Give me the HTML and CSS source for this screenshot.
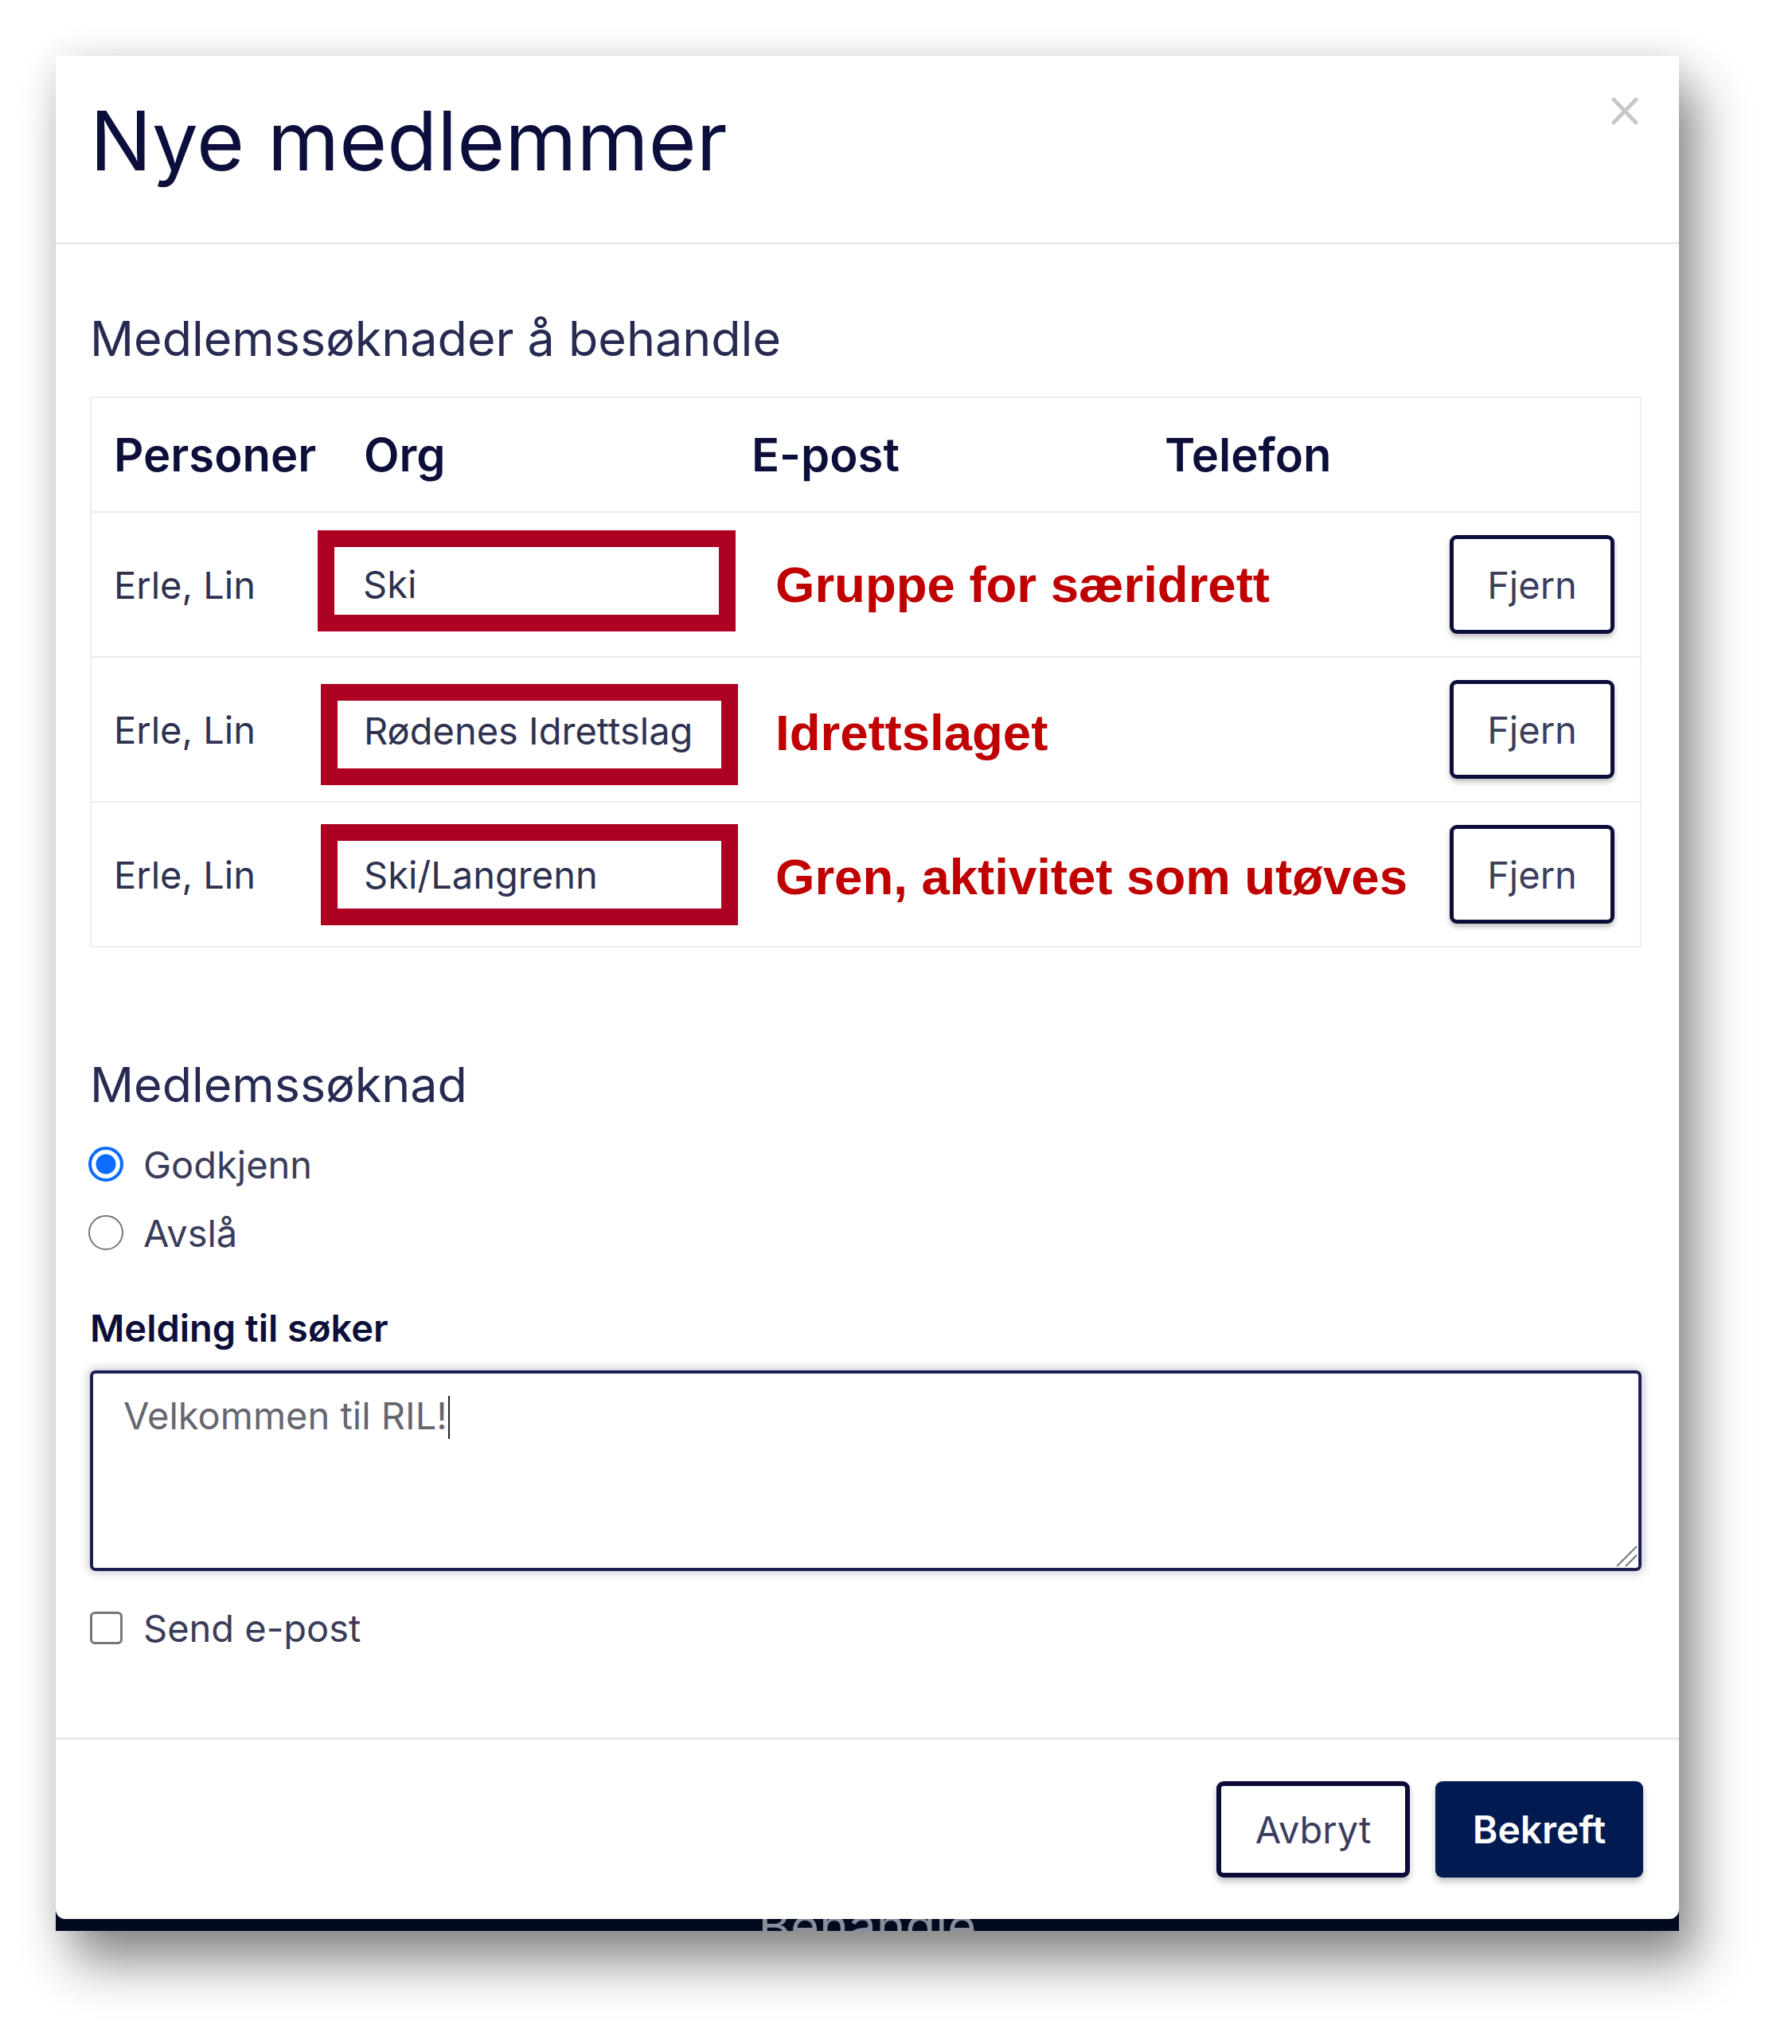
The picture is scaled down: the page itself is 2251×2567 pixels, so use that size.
FILE: index.html
```html
<!DOCTYPE html>
<html lang="no">
<head>
<meta charset="utf-8">
<title>Nye medlemmer</title>
<link rel="stylesheet" href="styles.css">
</head>
<body>
<div class="stage">
  <div class="shot">
    <div class="dialog">
      <header class="dlg-head">
        <h1 class="dlg-title">Nye medlemmer</h1>
        <button class="close" aria-label="Lukk">
          <svg width="36" height="35" viewBox="0 0 36 35"><path d="M4 3 L32 32 M32 3 L4 32" stroke="#c8c8c8" stroke-width="5" stroke-linecap="round" fill="none"/></svg>
        </button>
      </header>
      <div class="dlg-body">
        <h2 class="section-title">Medlemssøknader å behandle</h2>
        <div class="tbl">
          <div class="tbl-head">
            <div class="th">Personer</div>
            <div class="th">Org</div>
            <div class="th">E-post</div>
            <div class="th">Telefon</div>
          </div>
          <div class="tr tr-1">
            <div class="td-name">Erle, Lin</div>
            <div class="org-box">Ski</div>
            <div class="note">Gruppe for særidrett</div>
            <button class="btn-fjern">Fjern</button>
          </div>
          <div class="tr tr-2">
            <div class="td-name">Erle, Lin</div>
            <div class="org-box">Rødenes Idrettslag</div>
            <div class="note">Idrettslaget</div>
            <button class="btn-fjern">Fjern</button>
          </div>
          <div class="tr tr-3">
            <div class="td-name">Erle, Lin</div>
            <div class="org-box">Ski/Langrenn</div>
            <div class="note">Gren, aktivitet som utøves</div>
            <button class="btn-fjern">Fjern</button>
          </div>
        </div>

        <h2 class="section-title section-title--second">Medlemssøknad</h2>
        <div class="radios">
          <div class="radio"><span class="radio-dot radio-dot--on"></span><span>Godkjenn</span></div>
          <div class="radio"><span class="radio-dot"></span><span>Avslå</span></div>
        </div>

        <div class="field-label">Melding til søker</div>
        <div class="textarea">Velkommen til RIL!<span class="caret"></span>
          <svg class="grip" width="30" height="30" viewBox="0 0 30 30"><path d="M3 28 L28 3 M14 28 L28 14" stroke="#7a7a7a" stroke-width="2.2" fill="none"/></svg>
        </div>

        <div class="check"><span class="check-box"></span><span>Send e-post</span></div>
      </div>
      <footer class="dlg-foot">
        <button class="btn-cancel">Avbryt</button>
        <button class="btn-primary">Bekreft</button>
      </footer>
    </div>
    <div class="underlay"><span>Behandle</span></div>
  </div>
</div>
</body>
</html>
```

FILE: styles.css
```css
html, body {
  margin: 0;
  padding: 0;
  background: #ffffff;
}

body {
  font-family: Inter, "Noto Sans", sans-serif;
  width: 2251px;
  height: 2567px;
  overflow: hidden;
}

.stage {
  padding: 70px 0 0 70px;
}

.shot {
  width: 2039px;
  background: #020a1f;
  box-shadow: 22px 40px 60px rgba(0, 0, 0, 0.45), 0 0 40px rgba(0, 0, 0, 0.10);
}

.dialog {
  position: relative;
  background: #ffffff;
  border-radius: 0 0 12px 12px;
}

/* Header */
.dlg-head {
  padding: 45px 47px 65px 43px;
  border-bottom: 3px solid #e9e9ea;
}

.dlg-title {
  margin: 0;
  font-size: 103px;
  line-height: 124px;
  font-weight: 400;
  color: #0c0e3c;
}

.close {
  position: absolute;
  top: 52px;
  right: 50px;
  width: 36px;
  height: 35px;
  padding: 0;
  border: 0;
  background: none;
}

.close svg {
  display: block;
}

/* Body */
.dlg-body {
  padding: 81px 47px 117px 43px;
}

.section-title {
  margin: 0;
  font-size: 61px;
  line-height: 74px;
  font-weight: 400;
  color: #272b52;
}

.section-title--second {
  margin-top: 135px;
}

/* Table */
.tbl {
  margin-top: 36px;
  border: 2px solid #eceef0;
}

.tbl-head {
  display: grid;
  grid-template-columns: 314px 487px 519px 1fr;
  height: 142px;
  align-items: center;
}

.th {
  padding-left: 28px;
  font-size: 58px;
  line-height: 70px;
  font-weight: 600;
  color: #0c0f3a;
}

.tr {
  display: flex;
  align-items: center;
  height: 180px;
  border-top: 2px solid #e9ecef;
  padding: 0 32px 0 28px;
}

.td-name {
  width: 256px;
  flex: none;
  font-size: 47px;
  line-height: 57px;
  color: #2e3250;
}

.tr-2 .td-name,
.tr-3 .td-name {
  width: 260px;
}

.org-box {
  box-sizing: border-box;
  flex: none;
  width: 525px;
  height: 127px;
  border: 21px solid #ae0021;
  display: flex;
  align-items: center;
  padding-left: 36px;
  font-size: 47px;
  color: #2e3250;
  white-space: nowrap;
}

.tr-1 .org-box {
  margin-bottom: 10px;
  padding-top: 8px;
}

.tr-2 .org-box {
  width: 524px;
  padding-left: 33px;
  padding-bottom: 10px;
  margin-top: 12px;
}

.tr-3 .org-box {
  width: 524px;
  padding-left: 33px;
}

.note {
  margin-left: 50px;
  font-family: "Liberation Sans", Arial, sans-serif;
  font-weight: 700;
  font-size: 63.5px;
  line-height: 74px;
  color: #c00000;
  white-space: nowrap;
}

.tr-2 .note {
  margin-left: 47px;
  margin-top: 8px;
}

.tr-3 .note {
  margin-left: 47px;
  margin-top: 6px;
}

.btn-fjern {
  margin-left: auto;
  flex: none;
  box-sizing: border-box;
  width: 207px;
  height: 124px;
  border: 5px solid #0b0e3a;
  border-radius: 9px;
  background: #ffffff;
  box-shadow: 0 4px 6px rgba(0, 0, 0, 0.25);
  font-family: Inter, "Noto Sans", sans-serif;
  font-size: 47px;
  color: #3b3f5c;
  padding: 0;
}

/* Radios */
.radios {
  margin-top: 20px;
}

.radio {
  display: flex;
  align-items: center;
  height: 86px;
  gap: 25px;
  font-size: 47px;
  color: #3a3d5a;
}

.radio-dot {
  box-sizing: border-box;
  width: 44px;
  height: 44px;
  margin-left: -2px;
  border-radius: 50%;
  border: 2.5px solid #767676;
  background: #ffffff;
}

.radio-dot--on {
  border: 4px solid #0b6cfd;
  background: radial-gradient(circle, #0b6cfd 0 12px, #ffffff 13px);
}

/* Message */
.field-label {
  margin-top: 48px;
  font-size: 47px;
  line-height: 57px;
  font-weight: 600;
  color: #0c0f3a;
}

.textarea {
  position: relative;
  box-sizing: border-box;
  margin-top: 25px;
  height: 252px;
  border: 4px solid #1b1f52;
  border-radius: 7px;
  box-shadow: 0 0 12px 2px rgba(27, 31, 82, 0.25);
  padding: 24px 38px;
  font-size: 47px;
  line-height: 57px;
  color: #66666f;
}

.caret {
  display: inline-block;
  width: 2px;
  height: 54px;
  margin-left: 1px;
  background: #222222;
  vertical-align: -12px;
}

.grip {
  position: absolute;
  right: 0;
  bottom: 0;
}

.check {
  display: flex;
  align-items: center;
  gap: 26px;
  margin-top: 51px;
  height: 41px;
  font-size: 47px;
  color: #3a3d5a;
}

.check-box {
  box-sizing: border-box;
  width: 41px;
  height: 41px;
  border: 3px solid #767676;
  border-radius: 6px;
}

/* Footer */
.dlg-foot {
  display: flex;
  justify-content: flex-end;
  gap: 32px;
  padding: 52px 45px 52px;
  border-top: 3px solid #e9e9ea;
}

.btn-cancel,
.btn-primary {
  box-sizing: border-box;
  height: 121px;
  border-radius: 9px;
  padding: 0;
  font-family: Inter, "Noto Sans", sans-serif;
  box-shadow: 0 5px 8px rgba(0, 0, 0, 0.25);
}

.btn-cancel {
  width: 243px;
  border: 6px solid #0b0c3a;
  background: #ffffff;
  font-size: 47px;
  color: #3a3d5e;
}

.btn-primary {
  width: 261px;
  border: 0;
  background: #011b50;
  color: #ffffff;
  font-size: 48px;
  font-weight: 600;
}

/* Page under the dialog */
.underlay {
  height: 15px;
  overflow: hidden;
  text-align: center;
  font-size: 62px;
  line-height: 62px;
  color: #8b8e9c;
}

.underlay span {
  display: block;
  margin-top: -22px;
}
```
